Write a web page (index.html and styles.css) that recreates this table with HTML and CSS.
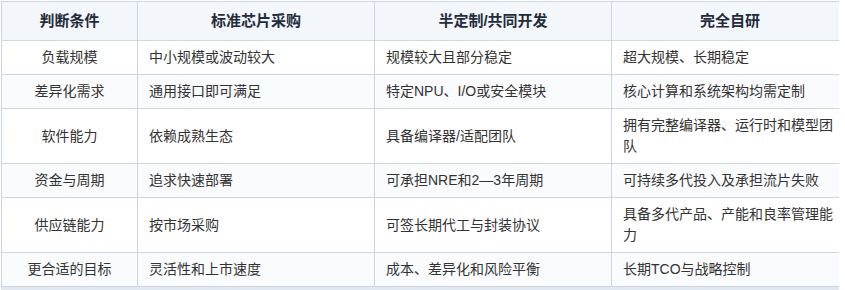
FILE: index.html
```html
<!DOCTYPE html>
<html lang="zh-CN">
<head>
<meta charset="utf-8">
<title>芯片策略对比</title>
<link rel="stylesheet" href="styles.css">
</head>
<body>
<div class="wrap">
  <table class="cmp">
    <colgroup>
      <col class="c1"><col class="c2"><col class="c3"><col class="c4">
    </colgroup>
    <thead>
      <tr><th>判断条件</th><th>标准芯片采购</th><th>半定制/共同开发</th><th>完全自研</th></tr>
    </thead>
    <tbody>
      <tr><td>负载规模</td><td>中小规模或波动较大</td><td>规模较大且部分稳定</td><td>超大规模、长期稳定</td></tr>
      <tr><td>差异化需求</td><td>通用接口即可满足</td><td>特定NPU、I/O或安全模块</td><td>核心计算和系统架构均需定制</td></tr>
      <tr><td>软件能力</td><td>依赖成熟生态</td><td>具备编译器/适配团队</td><td>拥有完整编译器、运行时和模型团队</td></tr>
      <tr><td>资金与周期</td><td>追求快速部署</td><td>可承担NRE和2—3年周期</td><td>可持续多代投入及承担流片失败</td></tr>
      <tr><td>供应链能力</td><td>按市场采购</td><td>可签长期代工与封装协议</td><td>具备多代产品、产能和良率管理能力</td></tr>
      <tr><td>更合适的目标</td><td>灵活性和上市速度</td><td>成本、差异化和风险平衡</td><td>长期TCO与战略控制</td></tr>
    </tbody>
  </table>
</div>
</body>
</html>
```

FILE: styles.css
```css
html, body {
  margin: 0;
  padding: 0;
  background: #ffffff;
}

body {
  font-family: "Liberation Sans", "Noto Sans CJK SC", sans-serif;
  color: #333333;
}

.wrap {
  margin: 1px 0 0 1px;
  width: 838px;
  overflow: hidden;
  border-bottom: 4px solid #e1e8f0;
}

.cmp {
  border-collapse: collapse;
  table-layout: fixed;
  width: 847px;
  font-size: 14px;
  line-height: 21px;
}

.c1 { width: 136px; }
.c2, .c3, .c4 { width: 237px; }

.cmp th,
.cmp td {
  border: 1px solid #cdd5df;
  padding: 6px 11px;
  text-align: left;
  vertical-align: middle;
}

.cmp th {
  background: #f3f6fa;
  color: #1f2d3d;
  font-size: 15px;
  font-weight: 700;
  text-align: center;
  padding: 8px 11px 9px;
}

.cmp td:first-child {
  text-align: center;
}

.cmp tbody tr:nth-child(even) td {
  background: #fafbfd;
}
```
